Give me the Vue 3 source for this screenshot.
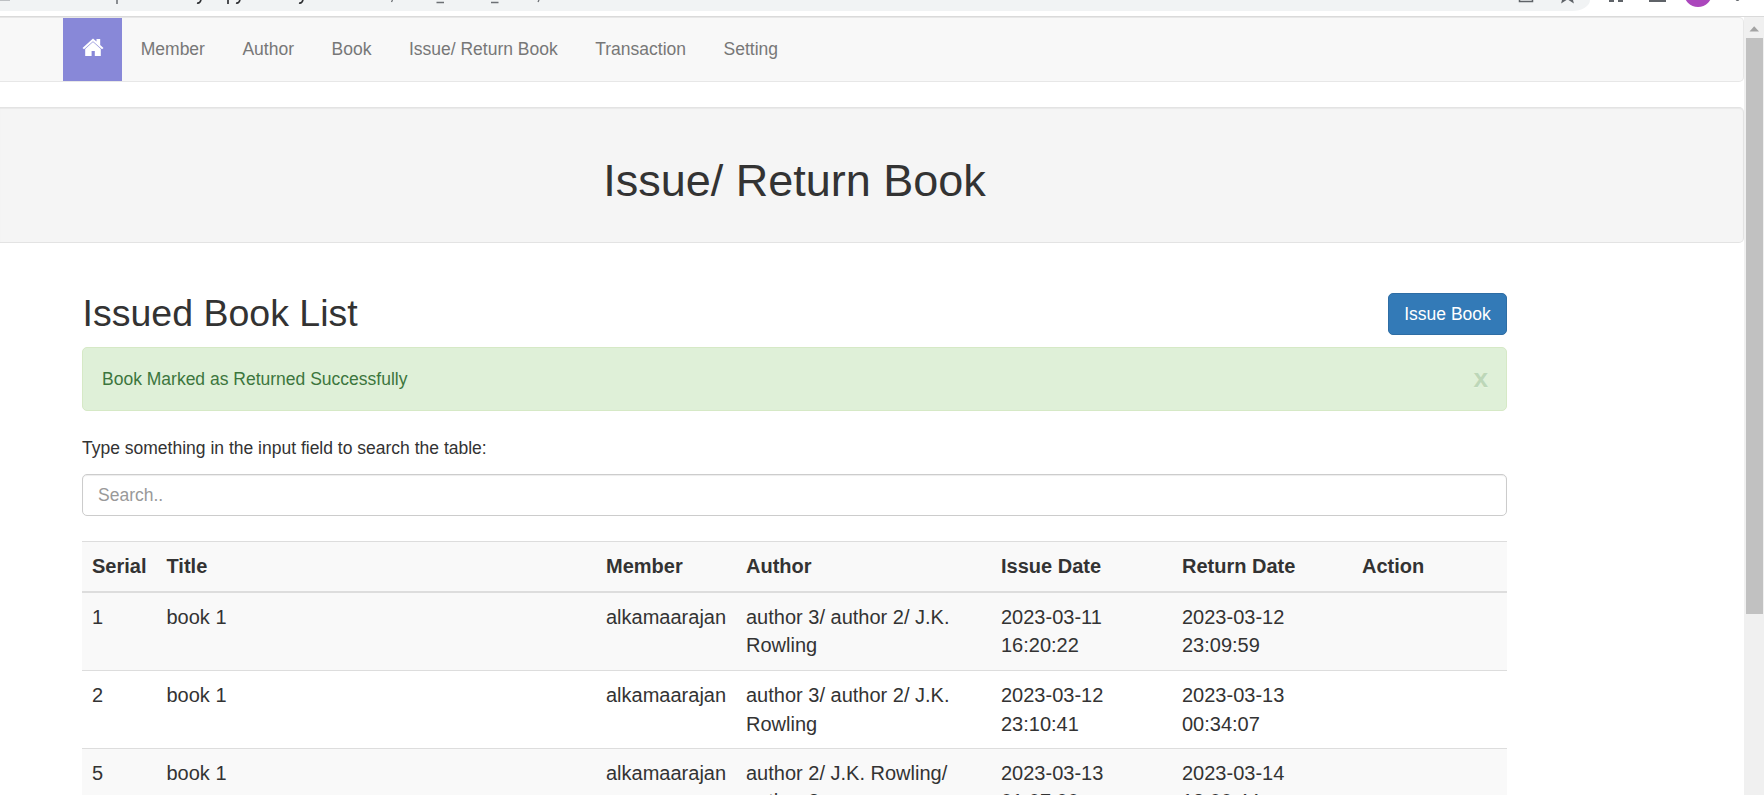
<script setup>
const links = ['Member', 'Author', 'Book', 'Issue/ Return Book', 'Transaction', 'Setting']
const columns = ['Serial', 'Title', 'Member', 'Author', 'Issue Date', 'Return Date', 'Action']
const rows = [
  ['1', 'book 1', 'alkamaarajan', 'author 3/ author 2/ J.K. Rowling', '2023-03-11 16:20:22', '2023-03-12 23:09:59', ''],
  ['2', 'book 1', 'alkamaarajan', 'author 3/ author 2/ J.K. Rowling', '2023-03-12 23:10:41', '2023-03-13 00:34:07', ''],
  ['5', 'book 1', 'alkamaarajan', 'author 2/ J.K. Rowling/ author 3', '2023-03-13 01:07:00', '2023-03-14 18:00:44', ''],
]
</script>

<template>
  <div class="window">
    <header class="chrome">
      <div class="omnibox">
        <svg width="1590" height="11" viewBox="0 0 1590 11">
          <path d="M0 0H10" stroke="#8a8d91" />
          <path d="M117 0V4" stroke="#8a8d91" stroke-width="2" />
          <path d="M201 0C200 3 199 3.500 197 3M228 0V4M240 0C239 3 238 3.500 236 3M303 0C302 3 301 3.500 299 3" fill="none" stroke="#303134" stroke-width="1.700" />
          <path d="M392.500 0L391.500 2M436.500 2.500H444M491 2.500H498.500M539 0L538 2" fill="none" stroke="#6d7074" stroke-width="1.300" />
          <path d="M1519.500 0V1.500H1532.500V0" fill="none" stroke="#5f6368" stroke-width="1.500" />
          <path d="M1563 -1L1562.300 1.800L1567.500 -1.500L1572.700 1.800L1572 -1" fill="none" stroke="#5f6368" stroke-width="1.500" />
        </svg>
      </div>
      <svg class="tools" width="174" height="11" viewBox="0 0 174 11">
        <path d="M19 0H24V2H19ZM28 0H33V2H28ZM59 0H76V2H59Z" fill="#5f6368" />
        <circle cx="108" cy="-7" r="14" fill="#ab47bc" />
        <circle cx="147.500" cy="-1" r="2" fill="#5f6368" />
      </svg>
    </header>
    <div class="viewport">
      <main class="page">
        <nav class="navbar">
          <a class="home">
            <svg width="22" height="19" viewBox="0 0 22 19" fill="#fff">
              <path d="M0.500 10L11 0.500L14.500 3.600V1H18.200V7L21.500 10L20 11.300L11 3.300L2 11.300Z" />
              <path d="M3.200 11L11 4.100L18.800 11V18H12.800V13H9.600V18H3.200Z" />
            </svg>
          </a>
          <a v-for="l in links" :key="l" class="link">{{ l }}</a>
        </nav>
        <section class="well"><h1>Issue/ Return Book</h1></section>
        <section class="content">
          <div class="titlebar">
            <h2>Issued Book List</h2>
            <button class="issue">Issue Book</button>
          </div>
          <div class="alert"><span>Book Marked as Returned Successfully</span><a class="close">x</a></div>
          <p>Type something in the input field to search the table:</p>
          <input class="search" type="text" placeholder="Search..">
          <table>
            <colgroup><col v-for="(c, i) in columns" :key="c" :class="'c' + i"></colgroup>
            <thead><tr><th v-for="c in columns" :key="c">{{ c }}</th></tr></thead>
            <tbody>
              <tr v-for="r in rows" :key="r[0]"><td v-for="(v, i) in r" :key="i">{{ v }}</td></tr>
            </tbody>
          </table>
        </section>
      </main>
      <aside class="scrollbar">
        <svg width="20" height="21" viewBox="0 0 20 21"><path d="M5.500 14.500L10.200 9.300L15 14.500Z" fill="#a3a3a3" /></svg>
        <div class="thumb"></div>
      </aside>
    </div>
  </div>
</template>

<style>
html, body { margin: 0; overflow: hidden; }
</style>

<style scoped>
* { box-sizing: border-box; }
.window { width: 1764px; height: 795px; overflow: hidden; display: flex; flex-direction: column; background: #fff; color: #333; font: 17.5px/25px "Liberation Sans", Arial, sans-serif; }
.chrome { height: 17px; flex: none; display: flex; border-bottom: 1px solid #dadada; }
.omnibox { width: 1590px; height: 11px; overflow: hidden; background: #f1f3f4; border-bottom-right-radius: 18px 11px; }
.chrome svg { display: block; }
.viewport { flex: 1; min-height: 0; display: flex; }
.page { width: 1744px; overflow: hidden; }
.navbar { height: 65px; display: flex; padding-left: 63px; background: #f8f8f8; border: 1px solid #e7e7e7; border-left: 0; border-radius: 0 5px 5px 0; }
.home { width: 59px; height: 63px; display: flex; justify-content: center; padding-top: 20px; background: #8888d8; }
.link { padding: 19px 18.75px; color: #777; }
.well { height: 136px; margin-top: 25px; padding-top: 48px; padding-left: 82px; background: #f5f5f5; border: 1px solid #e3e3e3; border-left: 0; border-radius: 0 5px 5px 0; box-shadow: inset 0 1px 1px rgba(0, 0, 0, .05); }
h1 { width: 1425px; margin: 0; font-size: 45px; line-height: 50px; font-weight: 400; text-align: center; }
.content { width: 1425px; margin: 50px 0 0 82px; }
.titlebar { height: 42px; display: flex; justify-content: space-between; }
h2 { margin: 0 0 0 0.5px; font-size: 37.5px; line-height: 41px; font-weight: 400; }
.issue { width: 119px; height: 42px; padding: 0; background: #337ab7; border: 1px solid #2e6da4; border-radius: 5px; color: #fff; font: inherit; }
.alert { height: 64px; margin-top: 12px; padding: 0 18px 0 19px; display: flex; align-items: center; justify-content: space-between; background: #dff0d8; border: 1px solid #d6e9c6; border-radius: 5px; color: #3c763d; }
.close { margin-bottom: 2px; font-size: 26.25px; line-height: 26px; font-weight: 700; opacity: .2; text-shadow: 0 1px 0 #fff; }
p { margin: 25px 0 13px; }
.search { display: block; width: 100%; height: 42px; padding: 0 15px; border: 1px solid #ccc; border-radius: 5px; box-shadow: inset 0 1px 1px rgba(0, 0, 0, .075); font: inherit; }
.search::placeholder { color: #999; opacity: 1; }
table { width: 1425px; margin-top: 25px; table-layout: fixed; border-collapse: separate; border-spacing: 0; font-size: 20px; line-height: 28.57px; }
.c0 { width: 74.5px; } .c1 { width: 439.5px; } .c2 { width: 140px; } .c3 { width: 255px; } .c4 { width: 181px; } .c5 { width: 180px; } .c6 { width: 155px; }
th, td { padding: 10px; vertical-align: top; text-align: left; border-top: 1px solid #ddd; }
th { height: 52px; border-bottom: 2px solid #ddd; }
tbody td { height: 78px; }
tbody tr:first-child td { height: 77px; border-top: 0; }
tbody tr:nth-child(odd) td { line-height: 28px; }
thead tr, tbody tr:nth-child(odd) { background: #f9f9f9; }
.scrollbar { width: 20px; background: #f0f0f0; }
.scrollbar svg { display: block; }
.thumb { width: 17px; height: 576px; margin-left: 2px; background: #c1c1c1; }
</style>
